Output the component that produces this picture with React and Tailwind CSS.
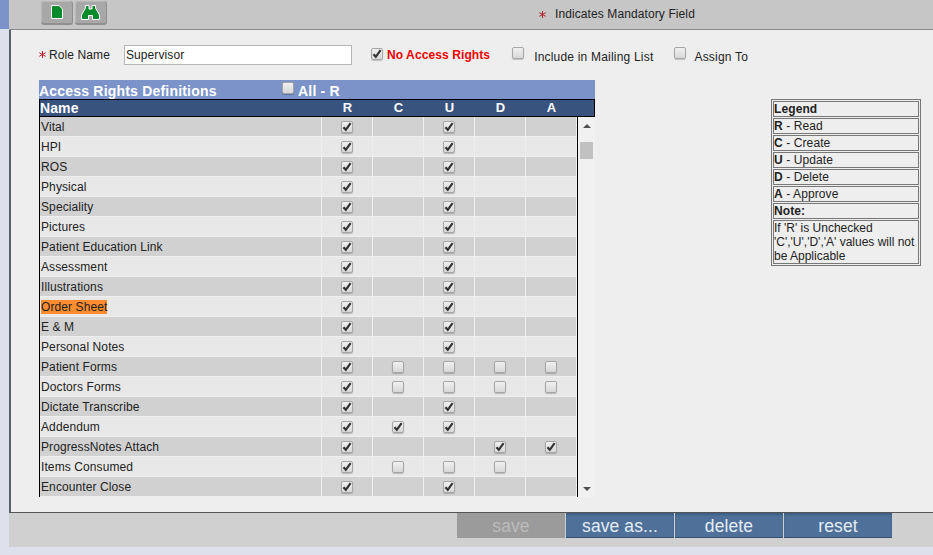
import React from "react";

const rows = [
  ["Vital", 1, null, 1, null, null],
  ["HPI", 1, null, 1, null, null],
  ["ROS", 1, null, 1, null, null],
  ["Physical", 1, null, 1, null, null],
  ["Speciality", 1, null, 1, null, null],
  ["Pictures", 1, null, 1, null, null],
  ["Patient Education Link", 1, null, 1, null, null],
  ["Assessment", 1, null, 1, null, null],
  ["Illustrations", 1, null, 1, null, null],
  ["Order Sheet", 1, null, 1, null, null],
  ["E & M", 1, null, 1, null, null],
  ["Personal Notes", 1, null, 1, null, null],
  ["Patient Forms", 1, 0, 0, 0, 0],
  ["Doctors Forms", 1, 0, 0, 0, 0],
  ["Dictate Transcribe", 1, null, 1, null, null],
  ["Addendum", 1, 1, 1, null, null],
  ["ProgressNotes Attach", 1, null, null, 1, 1],
  ["Items Consumed", 1, 0, 0, 0, null],
  ["Encounter Close", 1, null, 1, null, null],
];

const legend = [
  ["Legend", ""],
  ["R", " - Read"],
  ["C", " - Create"],
  ["U", " - Update"],
  ["D", " - Delete"],
  ["A", " - Approve"],
  ["Note:", ""],
];

function Check({ checked }) {
  return (
    <span className="flex h-[12px] w-[12px] shrink-0 items-center justify-center rounded-[2px] border border-[#a6a6a6] bg-gradient-to-b from-[#f0f0f0] to-[#d8d8d8] shadow-[0_1px_1px_rgba(0,0,0,0.2)]">
      {checked && (
        <svg width="10" height="10" viewBox="0 0 10 10">
          <path d="M1.5 5.2 L3.8 7.8 L8.6 1.2" fill="none" stroke="#333" strokeWidth="2.2" />
        </svg>
      )}
    </span>
  );
}

function Star() {
  return (
    <svg width="7" height="7" viewBox="0 0 7 7" className="shrink-0">
      <path d="M3.5 0 V7 M0.3 1.7 L6.7 5.3 M6.7 1.7 L0.3 5.3" stroke="#b0202a" strokeWidth="1" fill="none" />
    </svg>
  );
}

function ToolButton({ children }) {
  return (
    <button className="flex h-[24px] w-[32px] items-center justify-center rounded-[3px] border-b-2 border-r border-[#8f8f8f] bg-[#a8a8a8] shadow-[inset_1px_1px_0_#b9b9b9]">
      {children}
    </button>
  );
}

function ActionButton({ label, disabled }) {
  return (
    <button
      className={
        disabled
          ? "h-[25px] w-[108px] bg-[#9b9b9b] pt-[1px] text-[17.5px] leading-[25px] text-[#bcbcbc]"
          : "h-[25px] w-[108px] border-b border-[#34506f] bg-[#4f7199] pt-[1px] text-[17.5px] leading-[24px] text-[#e4edf6] shadow-[inset_0_2px_2px_#3f5f85]"
      }
    >
      {label}
    </button>
  );
}

export default function App() {
  return (
    <div className="flex h-[555px] w-[933px] overflow-hidden bg-[#dde1ec] font-['Liberation_Sans',Arial,sans-serif] text-[12px] tracking-[0.1px] text-[#222]">
      <div className="w-[9px] shrink-0">
        <div className="h-[29px] bg-[#7b93c9]" />
      </div>
      <div className="flex w-[924px] flex-col">
        {/* top toolbar */}
        <div className="flex h-[30px] items-start border-b border-[#8a8a8a] bg-[#c6c6c6]">
          <div className="ml-[32px] mt-[1px] flex gap-[2px]">
            <ToolButton>
              <svg width="12" height="14" viewBox="0 0 12 14">
                <path d="M0.5 0.5 H8 L11.5 4 V13.5 H0.5 Z" fill="#0b8a2c" stroke="#fff" />
              </svg>
            </ToolButton>
            <ToolButton>
              <svg width="19" height="15" viewBox="0 0 19 15">
                <path
                  d="M4.5 0.5 H8 V4 H11 V0.5 H14.5 V3 L18.5 10 V14.5 H11.5 V10.5 H7.5 V14.5 H0.5 V10 L4.5 3 Z"
                  fill="#0b8a2c"
                  stroke="#fff"
                />
              </svg>
            </ToolButton>
          </div>
          <div className="ml-[432px] mt-[5px] flex items-center">
            <Star />
            <span className="ml-[9px]">Indicates Mandatory Field</span>
          </div>
        </div>

        {/* main content */}
        <div className="flex h-[483px] flex-col border-b border-l-2 border-b-[#555] border-l-[#56606f] bg-[#eeeeee]">
          <div className="ml-[28px] flex h-[50px] items-start whitespace-nowrap pt-[15px]">
            <span className="mt-[6px]">
              <Star />
            </span>
            <span className="ml-[3px] leading-[20px]">Role Name</span>
            <input
              readOnly
              value="Supervisor"
              className="ml-[14px] h-[20px] w-[228px] border border-[#b5b5b5] bg-white px-[1px] text-[12px] outline-none"
            />
            <span className="ml-[19px] mt-[3px]">
              <Check checked />
            </span>
            <span className="ml-[4px] font-bold leading-[20px] text-[#f00000]">No Access Rights</span>
            <span className="ml-[22px] mt-[2px]">
              <Check />
            </span>
            <span className="ml-[10px] mt-[2px] leading-[20px] tracking-[0.2px]">Include in Mailing List</span>
            <span className="ml-[21px] mt-[2px]">
              <Check />
            </span>
            <span className="ml-[8px] mt-[2px] leading-[20px] tracking-[0.2px]">Assign To</span>
          </div>

          <div className="flex">
            <div className="ml-[28px] w-[556px] shrink-0">
              <div className="flex h-[19px] items-center bg-[#7b93c9] font-bold tracking-[0.2px] text-white">
                <span className="w-[243px] pt-[3px] text-[14px]">Access Rights Definitions</span>
                <span className="mb-[3px]">
                  <Check />
                </span>
                <span className="ml-[4px] pt-[3px] text-[14px]">All - R</span>
              </div>
              <div className="flex h-[18px] items-center border border-black bg-[#39537f] font-bold text-white">
                <span className="w-[282px] shrink-0 text-[14px]">Name</span>
                {["R", "C", "U", "D", "A"].map((h) => (
                  <span key={h} className="w-[51px] shrink-0 text-center text-[13px]">
                    {h}
                  </span>
                ))}
              </div>
              <div className="flex h-[380px]">
                <div className="w-[539px] border-x border-black">
                  {rows.map((r, i) => (
                    <div
                      key={r[0]}
                      className={`flex h-[20px] border-b border-[#efefef] pl-[1px] ${i % 2 === 0 ? "bg-[#d1d1d1]" : "bg-[#e8e8e8]"}`}
                    >
                      <div className="w-[281px] shrink-0 border-r border-[#efefef] leading-[20px]">
                        <span className={r[0] === "Order Sheet" ? "bg-[#ff8c2e]" : ""}>{r[0]}</span>
                      </div>
                      {r.slice(1).map((v, j) => (
                        <div
                          key={j}
                          className="flex w-[51px] shrink-0 items-center justify-center border-r border-[#efefef]"
                        >
                          {v !== null && <Check checked={v === 1} />}
                        </div>
                      ))}
                    </div>
                  ))}
                </div>
                {/* scrollbar */}
                <div className="flex w-[17px] flex-col bg-[#f1f1f1]">
                  <div className="flex h-[17px] items-center justify-center">
                    <span className="h-0 w-0 border-x-[4px] border-b-[4px] border-x-transparent border-b-[#505050]" />
                  </div>
                  <div className="mx-[2px] mt-[8px] h-[17px] bg-[#c1c1c1]" />
                  <div className="flex-1" />
                  <div className="flex h-[17px] items-center justify-center">
                    <span className="h-0 w-0 border-x-[4px] border-t-[4px] border-x-transparent border-t-[#505050]" />
                  </div>
                </div>
              </div>
            </div>

            {/* legend */}
            <div className="ml-[176px] mt-[19px] h-fit w-[150px] border border-[#777] p-[1px]">
              <div className="flex flex-col gap-[1px]">
                {legend.map(([a, b]) => (
                  <div key={a} className="h-[16px] border border-[#777] leading-[15px]">
                    <b>{a}</b>
                    {b}
                  </div>
                ))}
                <div className="border border-[#777] leading-[14px] tracking-normal">
                  If 'R' is Unchecked 'C','U','D','A' values will not be Applicable
                </div>
              </div>
            </div>
          </div>
        </div>

        {/* footer */}
        <div className="flex h-[34px] items-start bg-[#d0d0d0] pl-[448px]">
          <div className="flex gap-[1px]">
            <ActionButton label="save" disabled />
            <ActionButton label="save as..." />
            <ActionButton label="delete" />
            <ActionButton label="reset" />
          </div>
        </div>
      </div>
    </div>
  );
}
